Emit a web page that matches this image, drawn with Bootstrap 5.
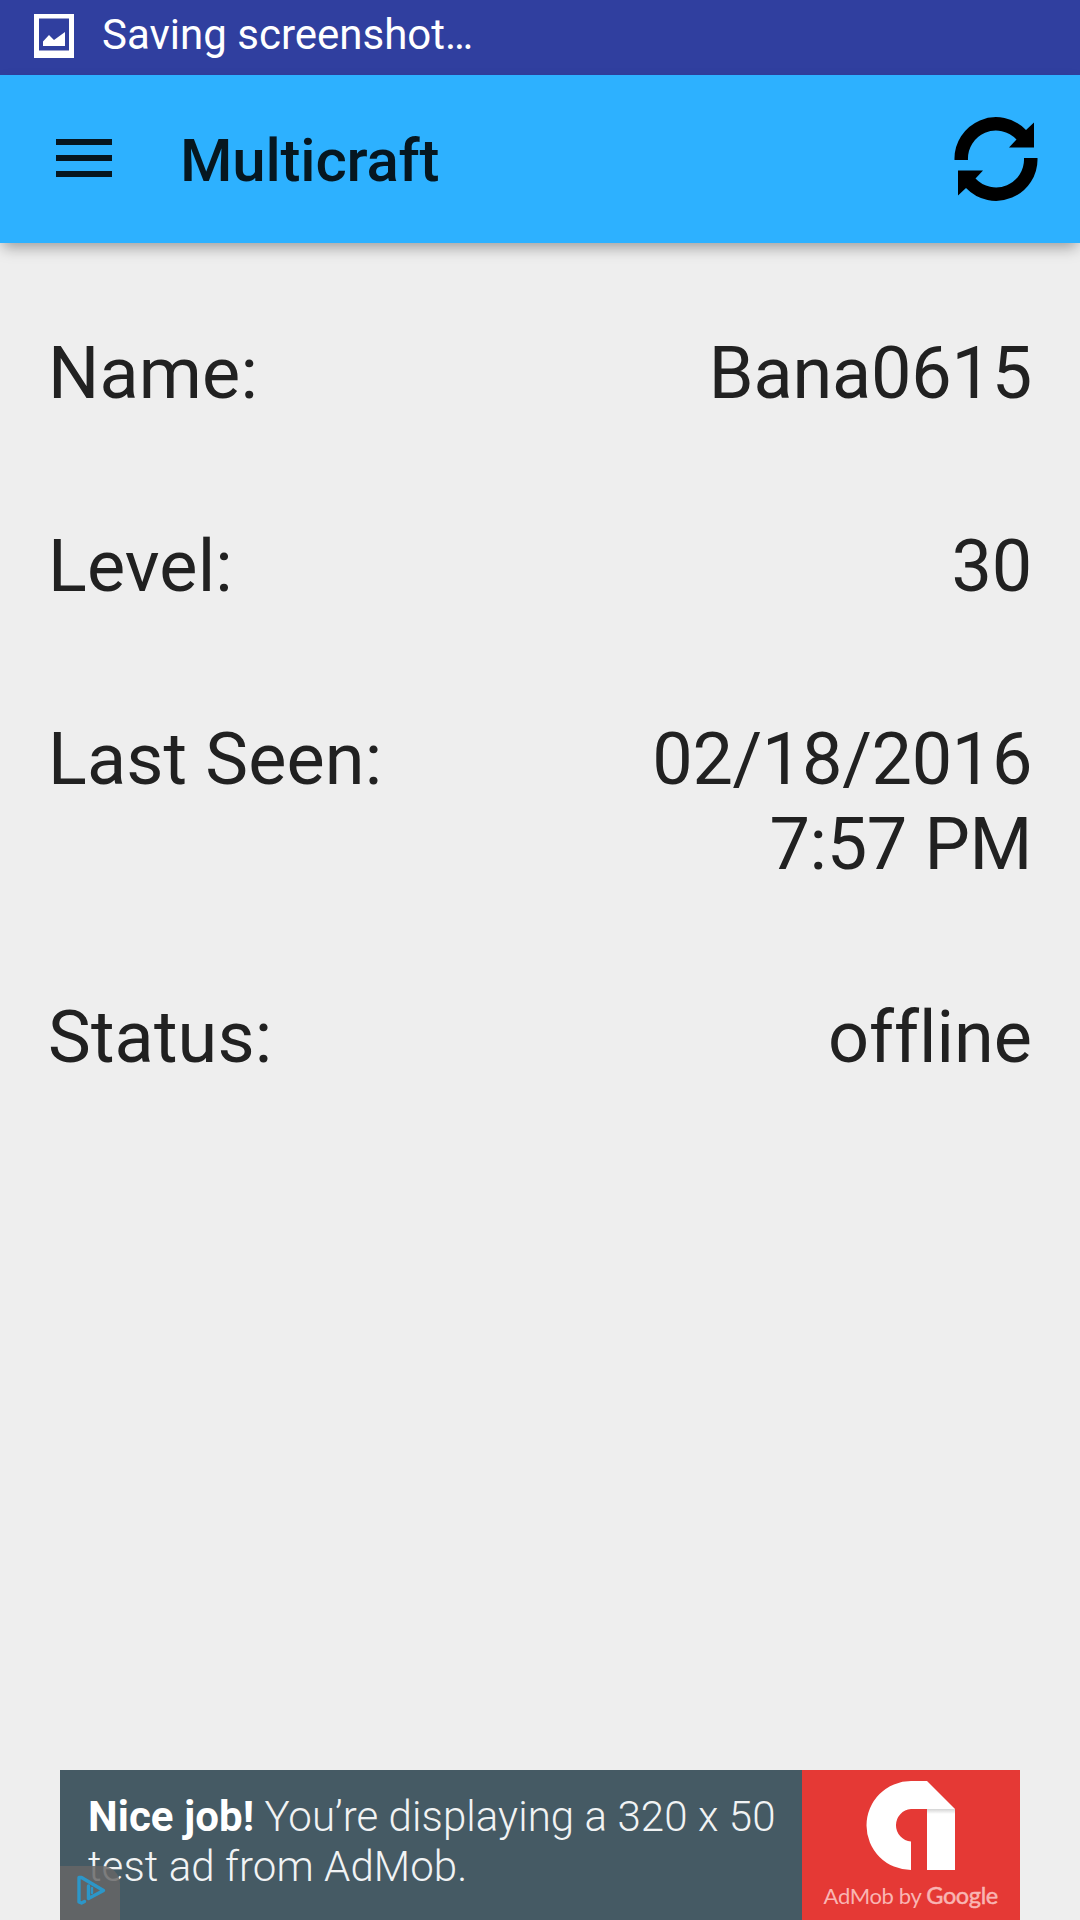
<!DOCTYPE html>
<html lang="en">
<head>
<meta charset="utf-8">
<meta name="viewport" content="width=device-width, initial-scale=1">
<title>Multicraft</title>
<link href="https://cdn.jsdelivr.net/npm/bootstrap@5.3.0/dist/css/bootstrap.min.css" rel="stylesheet">
<style>
body { font-family: Roboto, "Liberation Sans", sans-serif; background: #eee; color: #212121; }
.screen { height: 1920px; }
.status-bar { height: 75px; background: #303f9f; color: #fff; padding: 14px 0 0 34px; }
.status-text { font-size: 42px; line-height: 50px; margin: -4px 0 0 28px; }
.app-bar { height: 168px; background: #2db1ff; padding: 0 42px 0 56px; box-shadow: 0 7px 14px -3px rgba(0,0,0,.36); z-index: 1; }
.menu-icon { margin-bottom: 2px; }
.app-title { font-size: 60px; font-weight: 500; line-height: 70px; letter-spacing: -.2px; color: #061720; margin-left: 68px; padding-top: 4px; }
.details { padding: 34px 48px 0; font-size: 72px; line-height: 85px; font-variant-ligatures: none; }
.detail-row { padding: 54px 0; }
.detail-label { letter-spacing: .15px; }
.detail-value { letter-spacing: -.2px; }
.detail-date { letter-spacing: -.35px; }
.ad-banner { width: 960px; height: 150px; background: #455a64; color: #f1f3f4; }
.ad-copy { font-size: 42px; font-weight: 300; line-height: 50px; letter-spacing: .08px; padding: 22px 0 0 28px; }
.ad-copy strong { font-weight: 700; color: #fff; }
.ad-brand { width: 218.5px; background: #e53935; padding-top: 11px; }
.ad-brand-name { font: 400 22px/28px Lato, sans-serif; color: #f9b5b3; margin-top: 11px; letter-spacing: -.35px; }
.ad-brand-name span { font-size: 23.5px; -webkit-text-stroke: .5px #f9b5b3; }
.ad-choices { width: 60px; height: 54px; border-top-right-radius: 18px; background: rgba(102,102,102,.84); }
</style>
</head>
<body>
<div class="screen d-flex flex-column overflow-hidden">
  <div class="status-bar d-flex align-items-start flex-shrink-0">
    <svg width="40" height="44" viewBox="0 0 40 44" aria-hidden="true">
      <path fill="#fff" fill-rule="evenodd" d="M0 0H40V44H0ZM5 4.5V36.5H35V4.5ZM9 32V27.5L15 21L20 26L31 18V32Z"/>
    </svg>
    <div class="status-text">Saving screenshot…</div>
  </div>
  <header class="app-bar d-flex align-items-center position-relative flex-shrink-0">
    <svg class="menu-icon" width="56" height="38" viewBox="0 0 56 38" role="img" aria-label="Menu">
      <path fill="#061720" d="M0 0H56V6H0ZM0 16H56V22H0ZM0 32H56V38H0Z"/>
    </svg>
    <h1 class="app-title mb-0">Multicraft</h1>
    <svg class="ms-auto" width="84" height="84" viewBox="954 117 84 84" role="img" aria-label="Refresh">
      <path id="turn" d="M954.5 160A41.5 41.5 0 0 1 1026 130L1034 122.5V147.5H1009L1016.5 139.5A28 28 0 0 0 968 160Z"/>
      <use href="#turn" transform="rotate(180 996 159)"/>
    </svg>
  </header>
  <main class="details flex-grow-1">
    <div class="detail-row d-flex justify-content-between"><div class="detail-label">Name:</div><div class="detail-value text-end">Bana0615</div></div>
    <div class="detail-row d-flex justify-content-between"><div class="detail-label">Level:</div><div class="detail-value text-end">30</div></div>
    <div class="detail-row d-flex justify-content-between"><div class="detail-label">Last Seen:</div><div class="detail-date text-end">02/18/2016<br>7:57 PM</div></div>
    <div class="detail-row d-flex justify-content-between"><div class="detail-label">Status:</div><div class="text-end">offline</div></div>
  </main>
  <footer class="ad-banner d-flex mx-auto position-relative flex-shrink-0">
    <div class="ad-copy flex-grow-1 text-nowrap"><strong>Nice job!</strong> You’re displaying a 320 x 50<br>test ad from AdMob.</div>
    <div class="ad-brand d-flex flex-column align-items-center flex-shrink-0">
      <svg width="90" height="89" viewBox="0 0 90 89" aria-hidden="true">
        <defs><linearGradient id="fold" x2="0" y2="1"><stop stop-color="#d4d4d4"/><stop offset="1" stop-color="#fff"/></linearGradient></defs>
        <path fill="#fff" d="M45 89A44.5 44.5 0 0 1 45 0H61L89 28V89H61V28H45A16.3 16.3 0 0 0 45 60.5Z"/>
        <path fill="url(#fold)" d="M61 28H89V33H61Z"/>
      </svg>
      <div class="ad-brand-name text-nowrap">AdMob by <span>Google</span></div>
    </div>
    <div class="ad-choices position-absolute start-0 bottom-0">
      <svg width="60" height="54" viewBox="0 0 60 54" fill="none" stroke="#2c96c8" stroke-width="3.4" stroke-linejoin="round" stroke-linecap="round" role="img" aria-label="AdChoices">
        <path d="M24.5 35.5L21.5 37L19 36V11.5L21.5 11.5L43.5 24.5L28.5 32.5V20"/>
        <path stroke-width="2.4" d="M32 22V27"/>
      </svg>
    </div>
  </footer>
</div>
<script src="https://cdn.jsdelivr.net/npm/bootstrap@5.3.0/dist/js/bootstrap.bundle.min.js"></script>
</body>
</html>
